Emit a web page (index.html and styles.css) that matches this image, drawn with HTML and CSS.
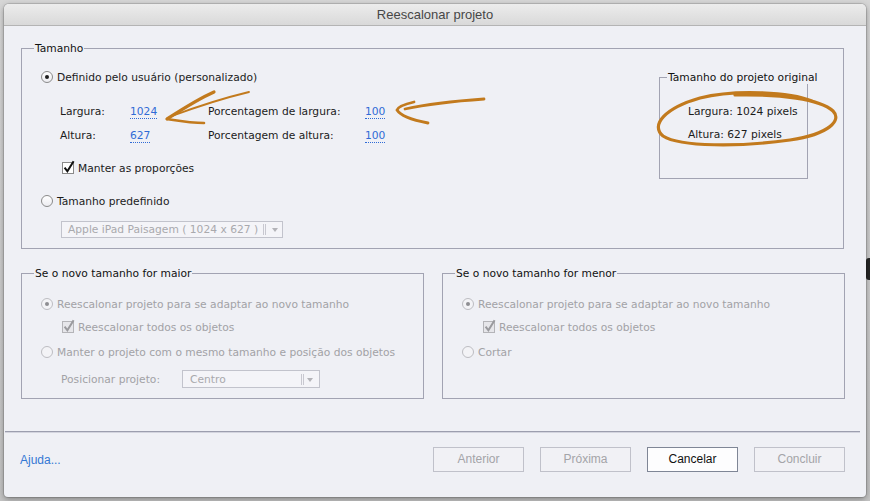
FILE: index.html
```html
<!DOCTYPE html>
<html lang="pt">
<head>
<meta charset="utf-8">
<title>Reescalonar projeto</title>
<link rel="stylesheet" href="styles.css">
</head>
<body>
<div class="desk-blob"></div>
<div class="window">
  <div class="titlebar">Reescalonar projeto</div>
  <div class="content">
    <fieldset class="group group-main">
      <legend>Tamanho</legend>
      <div class="main-body">
        <div class="main-left">
          <div class="opt"><span class="radio on"></span><span class="lbl">Definido pelo usuário (personalizado)</span></div>
          <div class="dims">
            <span>Largura:</span><span><span class="val">1024</span></span>
            <span>Porcentagem de largura:</span><span><span class="val">100</span></span>
            <span>Altura:</span><span><span class="val">627</span></span>
            <span>Porcentagem de altura:</span><span><span class="val">100</span></span>
          </div>
          <div class="opt sub"><svg class="cb" width="13" height="14" viewBox="0 0 13 14"><rect x="0.5" y="2.5" width="11" height="11" fill="#fff" stroke="#8a8a8a"/><path d="M2.6 7.6 L5.4 11.3 L11.6 1.2" fill="none" stroke="#111" stroke-width="2"/></svg><span class="lbl">Manter as proporções</span></div>
          <div class="opt gap19"><span class="radio"></span><span class="lbl">Tamanho predefinido</span></div>
          <div class="select select-preset"><span>Apple iPad Paisagem ( 1024 x 627 )</span><span class="sep"></span><svg class="arr" width="6" height="4" viewBox="0 0 6 4"><path d="M0 0 H6 L3 4 Z" fill="#b3b3b8"/></svg></div>
        </div>
        <fieldset class="orig">
          <legend>Tamanho do projeto original</legend>
          <div class="orig-body">
            <div class="orig-line">Largura: 1024 pixels</div>
            <div class="orig-line second">Altura: 627 pixels</div>
          </div>
        </fieldset>
      </div>
    </fieldset>

    <div class="groups">
      <fieldset class="group">
        <legend>Se o novo tamanho for maior</legend>
        <div class="small-body dis">
          <div class="opt"><span class="radio on"></span><span class="lbl">Reescalonar projeto para se adaptar ao novo tamanho</span></div>
          <div class="opt sub g9"><svg class="cb" width="13" height="14" viewBox="0 0 13 14"><rect x="0.5" y="2.5" width="11" height="11" fill="#e6e6ea" stroke="#b4b4b8"/><path d="M2.6 7.6 L5.4 11.3 L11.6 1.2" fill="none" stroke="#9a9a9e" stroke-width="2"/></svg><span class="lbl">Reescalonar todos os objetos</span></div>
          <div class="opt g11"><span class="radio"></span><span class="lbl">Manter o projeto com o mesmo tamanho e posição dos objetos</span></div>
          <div class="posrow">
            <span class="poslabel">Posicionar projeto:</span>
            <div class="select select-pos"><span>Centro</span><span class="sep"></span><svg class="arr" width="6" height="4" viewBox="0 0 6 4"><path d="M0 0 H6 L3 4 Z" fill="#b3b3b8"/></svg></div>
          </div>
        </div>
      </fieldset>
      <fieldset class="group">
        <legend>Se o novo tamanho for menor</legend>
        <div class="small-body dis">
          <div class="opt"><span class="radio on"></span><span class="lbl">Reescalonar projeto para se adaptar ao novo tamanho</span></div>
          <div class="opt sub g9"><svg class="cb" width="13" height="14" viewBox="0 0 13 14"><rect x="0.5" y="2.5" width="11" height="11" fill="#e6e6ea" stroke="#b4b4b8"/><path d="M2.6 7.6 L5.4 11.3 L11.6 1.2" fill="none" stroke="#9a9a9e" stroke-width="2"/></svg><span class="lbl">Reescalonar todos os objetos</span></div>
          <div class="opt g11"><span class="radio"></span><span class="lbl">Cortar</span></div>
        </div>
      </fieldset>
    </div>
  </div>
  <div class="separator"></div>
  <div class="footer">
    <a class="help">Ajuda...</a>
    <div class="buttons">
      <span class="btn">Anterior</span>
      <span class="btn">Próxima</span>
      <span class="btn primary">Cancelar</span>
      <span class="btn">Concluir</span>
    </div>
  </div>
</div>

<svg class="marks" width="870" height="501" viewBox="0 0 870 501">
  <g fill="none" stroke="#c27a1d" stroke-linecap="round">
    <path d="M167 119 C181 110 198 99 214 92" stroke-width="3.2"/>
    <path d="M172 116 C196 107 224 98 249 92" stroke-width="1.8"/>
    <path d="M167 119 C180 121 192 123 204 123" stroke-width="2.6"/>
    <path d="M405 109 C428 104 455 101 484 99" stroke-width="2.8"/>
    <path d="M414 102 C405 104 398 107 397 110 C400 115 412 120 428 123" stroke-width="2.8"/>
    <path d="M812 101 C790 92 735 89 700 98 C665 108 650 125 663 136 C680 147 740 147 790 140 C830 134 842 120 833 111 C820 99 780 94 735 95" stroke-width="3.2"/>
  </g>
</svg>
</body>
</html>
```

FILE: styles.css
```css
html, body {
  margin: 0;
  padding: 0;
}
body {
  position: relative;
  width: 870px;
  height: 501px;
  overflow: hidden;
  background: linear-gradient(#d6d6d6, #c4c4c4);
  font-family: "DejaVu Sans", sans-serif;
  font-size: 10.7px;
  color: #1b1b1b;
}
.desk-blob {
  position: absolute;
  left: 866px;
  top: 258px;
  width: 6px;
  height: 22px;
  border-radius: 3px 0 0 3px;
  background: #262626;
}
.window {
  position: relative;
  margin: 4px 0 0 4px;
  width: 862px;
  height: 493px;
  background: #eff0f5;
  border-radius: 5px 5px 4px 4px;
  box-shadow: 0 0 0 1px rgba(0,0,0,0.12), 0 2px 6px rgba(0,0,0,0.35);
  overflow: hidden;
  display: flex;
  flex-direction: column;
}
.titlebar {
  height: 21px;
  line-height: 21px;
  border-bottom: 1px solid #b4b4b4;
  background: linear-gradient(#ececec, #d9d9d9);
  text-align: center;
  font-family: "Liberation Sans", sans-serif;
  font-size: 13px;
  color: #474747;
}
.content {
  padding: 16px 21px 0 17px;
}
fieldset {
  margin: 0;
  padding: 0;
  border: 1px solid #a2a3b2;
  min-width: 0;
}
legend {
  padding: 0 1px;
  margin-left: 12px;
  line-height: 13px;
  color: #111;
  white-space: nowrap;
}
.group-main {
  margin-right: 1px;
}
.main-body {
  display: flex;
  align-items: flex-start;
  padding: 15px 35px 10px 0;
}
.main-left {
  flex: 1;
}
.opt {
  display: flex;
  align-items: center;
  gap: 4px;
  height: 14px;
  line-height: 14px;
  margin-left: 19px;
  white-space: nowrap;
}
.opt .lbl {
  padding-top: 2px;
}
.opt.sub {
  margin-left: 40px;
  gap: 3px;
  margin-top: 19px;
}
.opt.sub .cb {
  margin-top: -2px;
}
.opt.gap19 {
  margin-top: 19px;
}
.radio {
  box-sizing: border-box;
  width: 12px;
  height: 12px;
  border: 1px solid #8a8a8a;
  border-radius: 50%;
  background: linear-gradient(#ffffff, #ececf0);
  display: flex;
  align-items: center;
  justify-content: center;
  flex: none;
}
.radio.on::after {
  content: "";
  width: 4px;
  height: 4px;
  border-radius: 50%;
  background: #1e1e1e;
}
.cb {
  flex: none;
  overflow: visible;
}
.dims {
  display: grid;
  grid-template-columns: 70px 78px 157px auto;
  grid-auto-rows: 14px;
  row-gap: 10px;
  line-height: 16px;
  margin: 20px 0 0 38px;
  white-space: nowrap;
}
.val {
  color: #2f6bd6;
  border-bottom: 1px dotted #2f6bd6;
}
.select {
  box-sizing: border-box;
  display: flex;
  align-items: center;
  border: 1px solid #c2c3cc;
  background: #f4f4f8;
  color: #a9a9ad;
  white-space: nowrap;
}
.select-preset {
  margin: 13px 0 0 39px;
  width: 222px;
  height: 17px;
  padding-left: 6px;
}
.sep {
  margin-left: auto;
  width: 1px;
  height: 11px;
  border-left: 1px solid #c8c8d0;
  border-right: 1px solid #c8c8d0;
}
.arr {
  margin: 1px 4px 0 6px;
}
.orig {
  box-sizing: border-box;
  width: 149px;
  margin-top: 1px;
  padding: 0;
  flex: none;
}
.orig legend {
  margin-left: 7px;
  margin-right: -80px;
}
.orig-body {
  padding: 20px 0 37px 28px;
}
.orig-line {
  line-height: 14px;
  padding-top: 1px;
  height: 13px;
  white-space: nowrap;
}
.orig-line.second {
  margin-top: 9px;
}
.groups {
  display: flex;
  gap: 18px;
  margin-top: 18px;
}
.groups .group {
  flex: 1 1 0;
}
.small-body {
  padding: 17px 0 10px 0;
}
.dis {
  color: #a2a2a6;
}
.dis .radio {
  border-color: #bdbdc2;
  background: #f3f3f6;
}
.dis .radio.on::after {
  background: #8e8e92;
}
.opt.g9 {
  margin-top: 9px;
}
.opt.g11 {
  margin-top: 11px;
}
.posrow {
  display: flex;
  align-items: center;
  margin: 11px 0 0 39px;
  height: 18px;
}
.poslabel {
  width: 121px;
  white-space: nowrap;
}
.select-pos {
  width: 138px;
  height: 18px;
  padding-left: 7px;
}
.select-pos .arr {
  margin: 1px 6px 0 3px;
}
.separator {
  margin: 32px 6px 0 1px;
  height: 1px;
  background: #9c9eae;
  box-shadow: 0 1px 0 #d3d4de;
}
.footer {
  display: flex;
  align-items: center;
  padding: 15px 21px 0 16px;
  font-family: "Liberation Sans", sans-serif;
  font-size: 12px;
  line-height: 14px;
}
.help {
  color: #3478d4;
}
.buttons {
  margin-left: auto;
  display: flex;
  gap: 16px;
}
.btn {
  box-sizing: border-box;
  width: 91px;
  height: 25px;
  padding-bottom: 1px;
  display: flex;
  align-items: center;
  justify-content: center;
  border: 1px solid #c0c1ca;
  background: #f1f1f5;
  color: #a4a4a8;
}
.btn.primary {
  border-color: #7f8696;
  background: #fdfdfe;
  color: #111;
}
.marks {
  position: absolute;
  left: 0;
  top: 0;
  pointer-events: none;
}
```
